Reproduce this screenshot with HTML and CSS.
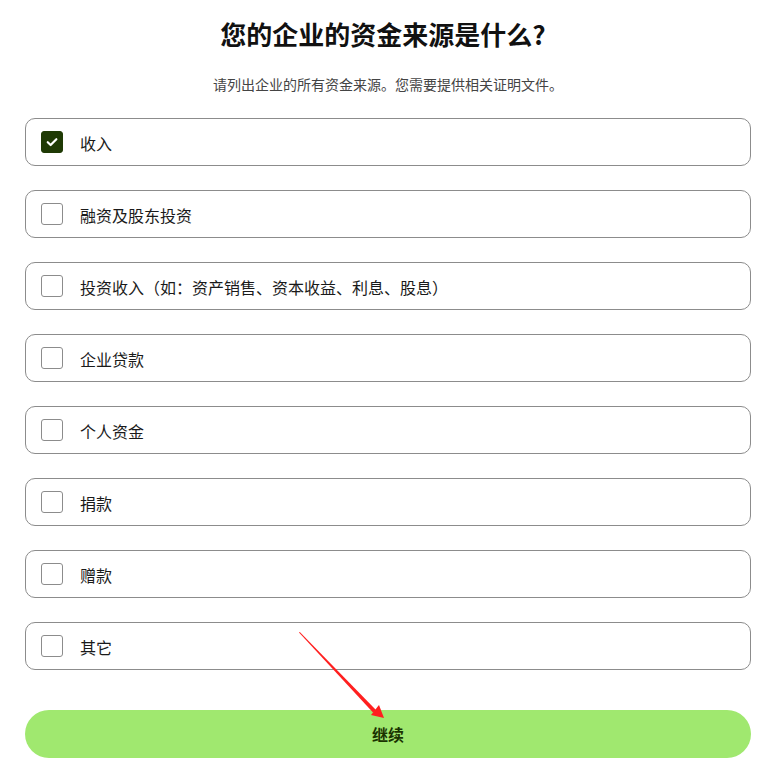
FILE: index.html
```html
<!DOCTYPE html>
<html lang="zh-CN">
<head>
    <meta charset="utf-8">
    <meta name="viewport" content="width=device-width, initial-scale=1">
    <link rel="stylesheet" href="styles.css">
</head>
<body>

<div class="page">
    <h2 class="title">您的企业的资金来源是什么?</h2>
    <p class="subtitle">请列出企业的所有资金来源。您需要提供相关证明文件。</p>

    <!-- 资金来源列表 -->
    <ul class="sources">
        <li class="source checked"><span class="box"><svg viewBox="0 0 22 22" width="22" height="22"><path d="M6.3 11.3l3.2 3.1 6.3-6.5" fill="none" stroke="#fff" stroke-width="2.4" stroke-linecap="round" stroke-linejoin="round"/></svg></span>收入</li>
        <li class="source"><span class="box"></span>融资及股东投资</li>
        <li class="source"><span class="box"></span>投资收入（如：资产销售、资本收益、利息、股息）</li>
        <li class="source"><span class="box"></span>企业贷款</li>
        <li class="source"><span class="box"></span>个人资金</li>
        <li class="source"><span class="box"></span>捐款</li>
        <li class="source"><span class="box"></span>赠款</li>
        <li class="source"><span class="box"></span>其它</li>
    </ul>

    <button class="nextBtn">继续</button>

    <!-- 标注箭头 -->
    <svg class="arrow" width="110" height="110" viewBox="0 0 110 110">
        <polygon points="9,12.5 9.8,12 86,90 83,92.5" fill="#ff1f1f"/>
        <polygon points="81,95 94,98 89,85" fill="#ff1f1f"/>
    </svg>
</div>

</body>
</html>
```

FILE: styles.css
```css
* {
    box-sizing: border-box;
}

body {
    margin: 0;
    background: #ffffff;
    font-family: "Noto Sans CJK SC", "Noto Sans", sans-serif;
    color: #111;
}

.page {
    position: relative;
    padding: 14px 27px 0 25px;
}

/* Nadpis */
.title {
    margin: 0;
    padding-right: 10px;
    text-align: center;
    font-size: 26px;
    font-weight: 700;
    line-height: 40px;
    color: #111;
}

.subtitle {
    margin: 21px 0 0;
    text-align: center;
    font-size: 14px;
    line-height: 18px;
    color: #444;
}

.sources {
    margin: 25px 0 0;
    padding: 0;
    list-style-type: none;
    display: flex;
    flex-direction: column;
    gap: 24px;
}

.source {
    display: flex;
    align-items: center;
    height: 48px;
    padding: 1px 0 0 15px;
    border: 1px solid #8c8c8c;
    border-radius: 10px;
    font-size: 16px;
    color: #1a1a1a;
}

.box {
    width: 22px;
    height: 22px;
    margin: -1px 17px 0 0;
    border: 1px solid #8c8c8c;
    border-radius: 3px;
    display: flex;
    align-items: center;
    justify-content: center;
}

.source.checked .box {
    background: #1f3a05;
    border-color: #1f3a05;
}

.box svg {
    display: block;
}

/* Tlačidlo */
.nextBtn {
    display: block;
    width: 100%;
    height: 48px;
    margin-top: 40px;
    border: none;
    border-radius: 24px;
    background: #a0e86f;
    color: #1a3300;
    font-family: "Noto Sans CJK SC", sans-serif;
    font-size: 16px;
    font-weight: 700;
}

.arrow {
    position: absolute;
    left: 290px;
    top: 620px;
}
```
